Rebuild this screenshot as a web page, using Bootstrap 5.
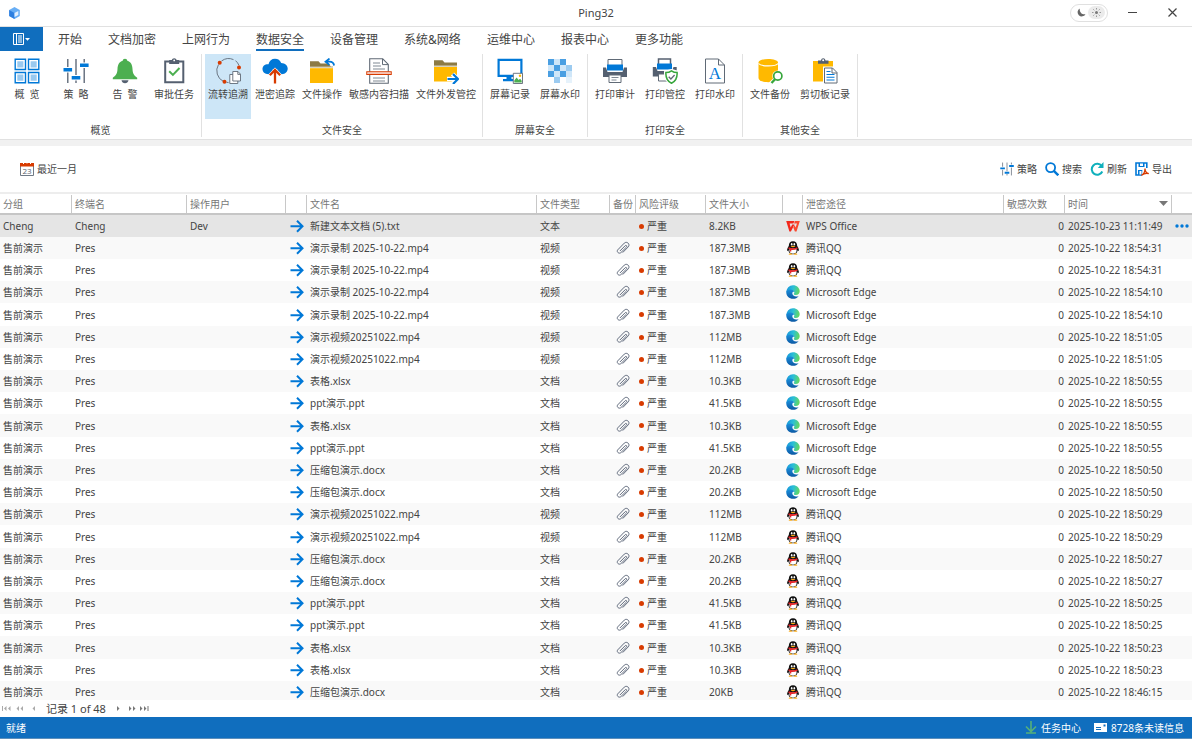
<!DOCTYPE html>
<html lang="zh-CN">
<head>
<meta charset="utf-8">
<meta name="viewport" content="width=device-width, initial-scale=1">
<title>Ping32</title>
<link href="https://cdn.jsdelivr.net/npm/bootstrap@5.3.0/dist/css/bootstrap.min.css" rel="stylesheet">
<style>
  :root { --brand: #106ebe; --ink: #444; --rule: #e1e1e1; }
  body { font-family: "Noto Sans", "Noto Sans CJK SC", sans-serif; font-size: 10px; line-height: 14px; color: var(--ink); background: #fff; }
  button { color: inherit; }
  svg { display: block; flex: none; }

  .titlebar { height: 27px; border-bottom: 1px solid var(--rule); grid-template-columns: 1fr auto 1fr; padding-bottom: 1px; }
  .app-title { font-size: 11px; }
  .theme-switch { width: 38px; height: 18px; border: 1px solid #e0e0e0; border-radius: 9px; background: #fff; padding: 0 2px 0 6px; }
  .theme-sun { width: 17px; height: 13px; border-radius: 7px; background: #ebebeb; }
  .win-btn { width: 40px; height: 24px; }
  .plain { background: none; border: 0; padding: 0; }

  .tabs-row { height: 24px; }
  .file-menu { width: 43px; background: var(--brand); }
  .tabs-list { gap: 26px; padding-left: 15px; }
  .tab-link { color: var(--ink); font-size: 12px; line-height: 16px; padding: 5px 0 0; border-bottom: 2px solid transparent; text-decoration: none; height: 24px; display: block; }
  .tab-link.active { border-color: var(--brand); }

  .ribbon { height: 89px; border-bottom: 1px solid var(--rule); }
  .ribbon-group { border-right: 1px solid var(--rule); margin: 3px 0 2px; padding: 0 4px; }
  .ribbon-group h2 { font-size: 10px; line-height: 14px; margin: 0; font-weight: 400; text-align: center; }
  .tools { gap: 4px; }
  .tools-close { gap: 3px; }
  .tools-tight { gap: 1px; }
  .group-wide { padding: 0 3px; }
  .tool { min-width: 46px; height: 65px; padding: 4px 3px 0; white-space: pre; display: flex; flex-direction: column; align-items: center; gap: 3px; }
  .tool svg { width: 26px; height: 26px; }
  .tool.active { background: #cde6f7; }

  .band { height: 6px; background: #f1f1f1; }
  .filterbar { height: 48px; border-bottom: 2px solid #ededed; padding: 0 20px; }
  .filterbar svg { width: 14px; height: 14px; }
  .tight-gap { gap: 3px; }

  .grid-area { min-height: 0; flex: 1 1 0; }
  .log { table-layout: fixed; width: 100%; border-collapse: separate; border-spacing: 0; white-space: nowrap; }
  .log th { font-weight: 400; color: #777; height: 21px; padding: 0 0 0 3px; border-bottom: 2px solid #c6c6c6; background: linear-gradient(#c8c8c8, #c8c8c8) right 1px / 1px 18px no-repeat; }
  .log th:last-child { background: none; }
  .log td { height: 22px; padding: 0 0 0 3px; }
  .log tbody tr:nth-child(5n) td { height: 23px; }
  .log tbody tr:nth-child(even) { background: #f9f9f9; }
  .log tbody tr.current { background: #e5e5e5; }
  .log .num { text-align: right; padding-right: 1px; }
  .log .ico { padding: 0; }
  .log .ico svg { width: 14px; height: 14px; margin: 0 auto; }
  .log .ico-clip svg { margin-left: 6px; }
  .dot { width: 5px; height: 5px; border-radius: 50%; background: #d83b01; margin: 0 3px 0 0; }

  .pager { height: 17px; padding-left: 2px; color: #888; }
  .pager-text { color: var(--ink); font-size: 11px; margin: 0 6px 0 10px; }
  .statusbar { height: 22px; background: var(--brand); color: #fff; padding: 0 8px 0 6px; border-bottom: 1px solid #5d8fbb; }
  .status-items { gap: 13px; }
</style>
</head>
<body class="d-flex flex-column vh-100 overflow-hidden">

<svg width="0" height="0" class="position-absolute" aria-hidden="true">
  <defs>
    <linearGradient id="edgeA" x1="0" y1="0" x2="1" y2=".2"><stop offset="0" stop-color="#1690dc"/><stop offset=".55" stop-color="#2bbfd6"/><stop offset="1" stop-color="#5fd668"/></linearGradient>
    <linearGradient id="edgeB" x1="0" y1="0" x2="0" y2="1"><stop offset="0" stop-color="#1b8fdc"/><stop offset="1" stop-color="#0c59a4"/></linearGradient>
  </defs>
  <symbol id="i-tiles" viewBox="0 0 26 26">
    <g fill="#fff" stroke="#0078d7" stroke-width="1.4"><path d="M1.2 1.2h10.3v10.3H1.2zM14.5 1.2h10.3v10.3H14.5zM1.2 14.5h10.3v10.3H1.2zM14.5 14.5h10.3v10.3H14.5z"/></g>
    <path fill="#99c9ef" d="M3.3 3.3h6.1v6.1H3.3zM16.6 3.3h6.1v6.1h-6.1zM3.3 16.6h6.1v6.1H3.3zM16.6 16.6h6.1v6.1h-6.1z"/>
  </symbol>
  <symbol id="i-sliders" viewBox="0 0 26 26">
    <path stroke="#556070" stroke-width="1.3" d="M4.8 1v24M13 1v24M21.2 1v24"/>
    <path fill="#fff" d="M0 9h9.500v5.500H0zM8.300 17h9.500v5.500H8.300zM16.500 4.500h9.500V10h-9.500z"/>
    <path fill="#0078d7" d="M.5 10h8.600v3.600H.5zM8.700 18h8.600v3.600H8.700zM17 5.500h8.600v3.600H17z"/>
  </symbol>
  <symbol id="i-bell" viewBox="0 0 26 26">
    <path fill="#4caf50" d="M13 .8c1.400 0 2.200.8 2.300 2 3.800 1.200 5 4.300 5.200 8.200.2 4.200 1.200 6.500 4.700 8.700v1.500H.8v-1.500c3.500-2.200 4.500-4.500 4.700-8.700.2-3.900 1.400-7 5.200-8.200.1-1.200.9-2 2.300-2z"/>
    <path fill="#556070" d="M9.500 22.300h7c-.4 2-1.700 3-3.500 3s-3.100-1-3.500-3z"/>
  </symbol>
  <symbol id="i-approve" viewBox="0 0 26 26">
    <path fill="#fff" stroke="#556070" stroke-width="2" d="M4.200 3.500h18.100v20.800H4.200z"/>
    <path fill="#556070" d="M8.200 2h2.600c.3-1 1.200-1.700 2.400-1.700s2.100.7 2.400 1.700h2.600v4H8.200z"/><circle cx="13.200" cy="2.400" r=".9" fill="#fff"/>
    <path fill="none" stroke="#4caf50" stroke-width="2" d="M8.200 13.200l3.700 3.700 6.600-6.900"/>
  </symbol>
  <symbol id="i-trace" viewBox="0 0 26 26">
    <path fill="none" stroke="#606a76" stroke-width=".9" d="M6.500 3A12 12 0 0 1 18.500 1.600M20.500 2.600A12 12 0 0 1 24 7.500M3.500 6.500A12 12 0 0 0 8.500 23.500M11.500 24.300l2 .2"/>
    <circle cx="4.700" cy="4.800" r="2" fill="#d83b01"/><circle cx="24" cy="9.600" r="2" fill="#d83b01"/><circle cx="9.500" cy="23.700" r="2" fill="#d83b01"/>
    <g fill="#fff" stroke="#606a76" stroke-width=".9"><path d="M14.800 16.500h8v9h-8z"/><path d="M17.800 13.500h5.200l2.500 2.700v6.800h-7.700z"/><path fill="none" d="M22.800 13.700v2.700h2.700"/></g>
  </symbol>
  <symbol id="i-cloud" viewBox="0 0 26 26">
    <path fill="#0078d7" d="M6.500 6.200C7.200 2.700 9.700.7 13 .7c3 0 5.200 1.500 6.200 4.200 4 .2 6.500 2.400 6.500 5.700 0 3.200-2.400 5.600-6 5.600L13 9.500l-6.500 6.700C2.800 16.200.5 14 .5 11c0-2.900 2.300-5 6-4.800z"/>
    <path fill="none" stroke="#fff" stroke-width="4.500" d="M13 17v-6"/>
    <path fill="none" stroke="#d83b01" stroke-width="2.300" d="M13 25.500V12.500M7.800 17.200L13 12l5.200 5.200"/>
  </symbol>
  <symbol id="i-folderback" viewBox="0 0 26 26">
    <path fill="#8c7a45" d="M1 3.300h8.500l2 2.200h12.500v4H1z"/><path fill="#d9d2bc" d="M1 8.600h23v1.600H1z"/><path fill="#ffb900" d="M1 10.200h23V25H1z"/>
    <path fill="#fff" d="M14 0h12v8.600h-4z"/>
    <path fill="none" stroke="#0078d7" stroke-width="1.800" d="M20.500.6L16.500 3.700l4 3.200M16.700 3.700h3.800c2.600 0 4.200 1.300 4.600 3.800"/>
  </symbol>
  <symbol id="i-scan" viewBox="0 0 26 26">
    <path fill="#fff" stroke="#606a76" stroke-width="1.100" d="M3.700.8h13l5.600 5.600v18.800H3.700z"/><path fill="none" stroke="#606a76" d="M16.500 1v5.600H22"/>
    <path stroke="#808994" stroke-width="1.200" d="M7 5h7M7 8h8M7 11h12M7 20h12M7 23h12"/>
    <path fill="#fff" stroke="#d83b01" stroke-width="1.100" d="M.8 13.700h24.400v2.800H.8z"/><path stroke="#f19b80" d="M1.500 15.100h23"/>
  </symbol>
  <symbol id="i-foldersend" viewBox="0 0 26 26">
    <path fill="#8c7a45" d="M1 2.300h8.500l2 2.200h12.500v4H1z"/><path fill="#d9d2bc" d="M1 7.500h23v1.500H1z"/><path fill="#ffb900" d="M1 9h23v14.500H1z"/>
    <path fill="none" stroke="#fff" stroke-width="4.500" d="M14 21h11M19.500 16l5 5-5 5"/>
    <path fill="none" stroke="#0078d7" stroke-width="2.200" d="M14.500 21h10.500M20 16l5 5-5 5"/>
  </symbol>
  <symbol id="i-screen" viewBox="0 0 26 26">
    <path fill="none" stroke="#0078d7" stroke-width="2.200" d="M1.600 1.800h22.800v16H1.600z"/><path fill="#0078d7" d="M9.500 18h5v3h2v2.300H6V21h3.500z"/>
    <path fill="#fff" stroke="#606a76" stroke-width=".9" d="M16.300 15.300h9.200v10.200h-9.200z"/><path fill="#4caf50" d="M17.300 24.500v-2l2.300-3 2 2.500 1.500-1.300 1.600 2v1.800z"/><circle cx="23" cy="17.800" r="1.200" fill="#ffb900"/>
  </symbol>
  <symbol id="i-mosaic" viewBox="0 0 26 26">
    <path fill="#4a9fe2" d="M1 1h6v6H1zM13 1h6v6h-6zM7 7h6v6H7zM1 13h6v6H1zM13 13h6v6h-6z"/>
    <path fill="#9ccbf0" d="M19 7h6v6h-6zM7 19h6v6H7z"/>
    <path fill="#cfe6f8" d="M7 1h6v6H7zM1 7h6v6H1zM13 7h6v6h-6zM7 13h6v6H7zM19 13h6v6h-6z"/>
    <path fill="#e6f2fb" d="M19 19h6v6h-6z"/>
  </symbol>
  <symbol id="i-printer" viewBox="0 0 26 26">
    <path fill="#fff" stroke="#606a76" d="M6 1.500h14v6H6z"/><path fill="#556070" d="M1 9.500h3l1.500 4.500h15L22 9.500h3v9.500H1z"/><path fill="#0078d7" d="M5 6.500h16v6H5z"/>
    <path fill="#fff" stroke="#606a76" d="M7 17h12v7.500H7z"/><path stroke="#808994" d="M9.500 19.500h7M9.500 22h5"/>
  </symbol>
  <symbol id="i-printshield" viewBox="0 0 26 26">
    <path fill="#fff" stroke="#556070" stroke-width="1.500" d="M6.500 1h12v6h-12z"/><path fill="#556070" d="M.8 9h3.200l1.500 4h14.500l1.500-4h3.200v9.500H.8z"/><path fill="#0078d7" d="M5 5.500h15v6H5z"/>
    <path fill="#fff" stroke="#606a76" d="M6.500 16h9v7h-9z"/>
    <path fill="#fff" stroke="#fff" stroke-width="4" d="M19.500 13l5.500 1.500c.3 5-1.500 8.500-5.500 10.500-4-2-5.800-5.500-5.500-10.500z"/>
    <path fill="#fff" stroke="#37a63c" stroke-width="1.500" d="M19.500 12.800c1.700 1.200 3.500 1.700 5.600 1.700.3 5-1.500 8.800-5.600 10.700-4.100-1.900-5.900-5.700-5.600-10.700 2.100 0 3.900-.5 5.600-1.700z"/><path fill="none" stroke="#606a76" stroke-width="1.300" d="M16.700 18.700l2.200 2.300 3.700-4"/>
  </symbol>
  <symbol id="i-dbsearch" viewBox="0 0 26 26">
    <path fill="#ffb900" d="M1.500 4.500C1.500-.2 21 -.2 21 4.500V20c0 5.500-19.500 5.500-19.500 0z"/><path fill="none" stroke="#fff" stroke-width="1.200" d="M1.500 5.500c2.500 3.200 17 3.200 19.500 0"/>
    <path stroke="#fff" stroke-width="5" d="M14 26l6-6"/><circle cx="20.800" cy="18" r="5.500" fill="#fff"/><circle cx="20.800" cy="18" r="4.100" fill="#fff" stroke="#37a63c" stroke-width="1.700"/><path stroke="#37a63c" stroke-width="2.300" d="M14.500 25l3.500-3.800"/>
  </symbol>
  <symbol id="i-clipdoc" viewBox="0 0 26 26">
    <path fill="#ffb900" d="M1 3h20v20.500H1z"/><path fill="#556070" d="M6 2.500h3C9.300 1 10 .3 11.200.3s2 .7 2.300 2.200h3v3.200H6z"/><circle cx="11.200" cy="2.300" r="1" fill="#fff"/>
    <path fill="#fff" stroke="#fff" stroke-width="3" d="M12.500 10h8l4.500 4.500v10.500H12.500z"/><path fill="#fff" stroke="#606a76" d="M12.500 10h8l4.500 4.500V25H12.500z"/><path fill="none" stroke="#606a76" d="M20 10v5h5"/>
    <path stroke="#0078d7" stroke-width="1.100" d="M14.500 13.500h4M14.500 16.500h8M14.500 19.200h8M14.500 22h8"/>
  </symbol>
  <symbol id="i-search" viewBox="0 0 14 14"><circle cx="5.600" cy="5.600" r="4.500" fill="none" stroke="#0078d7" stroke-width="1.800"/><path stroke="#0078d7" stroke-width="2.400" d="M8.800 8.800l4.500 4.500"/></symbol>
  <symbol id="i-refresh" viewBox="0 0 14 14"><path fill="none" stroke="#10b0bc" stroke-width="2" d="M11.700 4A5.500 5.500 0 1 0 12.300 9.500"/><path fill="#10b0bc" d="M13.500 0v6H7.800z"/></symbol>
  <symbol id="i-export" viewBox="0 0 14 14">
    <path fill="#fff" stroke="#0078d7" stroke-width="1.600" d="M1 1h10.800v12H1z"/><path fill="#0078d7" d="M3.500 1h6v4h-6zM3 8h5v5H3z"/><path fill="#fff" d="M5 1.500h3V4H5zM4.500 9h2v3.500h-2z"/>
    <path fill="#fff" d="M7.500 6h6.500v8H7z"/><path fill="none" stroke="#d83b01" stroke-width="1.300" d="M6.500 13.300c2-1 3.500-3.800 3.500-6.800 0 3 1.300 4.700 3.800 5.200-2.500-.7-5-.1-7.300 1.600z"/>
  </symbol>
  <symbol id="i-arrow" viewBox="0 0 14 14"><path fill="none" stroke="#0078d7" stroke-width="2" d="M.5 7.200h12M7 1.700l5.500 5.500L7 12.700"/></symbol>
  <symbol id="i-clip" viewBox="0 0 14 14"><path fill="none" stroke="#606a7c" stroke-width="1" stroke-linecap="round" d="M4.200 9.700l5-5c.9-.9 2.200.4 1.300 1.300l-5.600 5.600C3.200 13.200.100 11 1.700 8.900l6.600-6.800c2.500-2.300 6.200 1 4 3.700L7 11.300"/></symbol>
  <symbol id="i-wps" viewBox="0 0 14 14"><path fill="#f2281c" d="M.2 2h8.300L7.300 4.500H3.600L4.700 8.500 6.200 5.500h2.300L4.900 12.500H3.400z"/><path fill="#fa4a2f" d="M9 2h4.800l-3.300 10.500H8.900L7.300 8.500 8.500 6l1.100 2.500L11 4.500H8z"/></symbol>
  <symbol id="i-qq" viewBox="0 0 14 14">
    <path fill="#111" d="M7 .3c2.800 0 4.200 1.900 4.200 4.600 1 1.500 1.800 3 1.700 4.400-.2 1-.8.7-1.300 0-.3 2.500-2 4-4.600 4S2.700 11.800 2.400 9.300c-.5.7-1.100 1-1.300 0C1 7.900 1.800 6.400 2.800 4.900 2.800 2.200 4.200.3 7 .3z"/>
    <path fill="#fff" d="M3.800 7.500h6.400c1.200 3.300-.5 5.200-3.200 5.200S2.600 10.800 3.800 7.500z"/><ellipse cx="5.700" cy="3.200" rx=".8" ry="1.200" fill="#fff"/><ellipse cx="8.300" cy="3.200" rx=".8" ry="1.200" fill="#fff"/>
    <path fill="#fbab18" d="M4.500 5.300q2.500-1.100 5 0Q7 7 4.500 5.300zM2.500 13.200q2-1.700 4 0-2 1-4 0zM7.500 13.200q2-1.700 4 0-2 1-4 0z"/>
    <path fill="#e8262a" d="M2.700 6.300q4.300 2 8.600 0l.3 1.400q-3 1.500-6.300 1.200v1.700H3.900V8.400l-1.500-.7z"/>
  </symbol>
  <symbol id="i-edge" viewBox="0 0 14 14">
    <path fill="url(#edgeA)" d="M.3 7.500C.3 3.500 3.300.3 7 .3c3.800 0 6.700 2.700 6.700 5.900 0 2.300-1.600 3.800-3.800 3.800-1.500 0-2.100-.5-2.100-1C7.800 8.600 8.400 8.200 8.300 7.200 8.200 6 6.800 5 5 5z"/>
    <path fill="url(#edgeB)" d="M.3 7.500C.3 5.500 2.500 4.300 4.600 4.500c2.200.1 3.600 1.300 3.700 2.500C7.300 6.400 6.300 7 6.300 8.300c0 1.700 1.700 3.200 3.900 3.200 1 0 1.800-.3 2.500-.6-1.300 1.900-3.400 2.900-5.700 2.900C3.200 13.800.3 11 .3 7.500z"/>
  </symbol>
</svg>

<header class="titlebar d-grid align-items-center flex-shrink-0">
  <div class="ps-2"><svg width="14" height="12" viewBox="0 0 14 12"><path fill="#68aef5" d="M6.500 0l5.300 3v6l-5.300 3-5.300-3V3z"/><path fill="#2d7fe0" d="M1.200 3l5.300 3v6L1.200 9z"/><path fill="#e3f0ff" d="M6.500 6l3.800-2v4L6.500 10z"/></svg></div>
  <div class="app-title">Ping32</div>
  <div class="d-flex align-items-center justify-content-end">
    <button class="theme-switch d-flex align-items-center justify-content-between" type="button" aria-label="主题">
      <svg width="9" height="9" viewBox="0 0 9 9"><path fill="#666" d="M2.800.5a4.200 4.200 0 1 0 5.700 5.700C5.500 7 2.200 4.500 2.800.5z"/></svg>
      <span class="theme-sun d-flex align-items-center justify-content-center"><svg width="9" height="9" viewBox="0 0 9 9"><circle cx="4.500" cy="4.500" r="1.500" fill="#777"/><path stroke="#999" d="M4.500 0v1.500M4.500 7.500V9M0 4.500h1.500M7.500 4.500H9M1.300 1.300l1 1M6.700 6.700l1 1M7.700 1.300l-1 1M2.300 6.700l-1 1"/></svg></span>
    </button>
    <button class="plain win-btn ms-1" type="button" aria-label="最小化"><svg class="mx-auto" width="9" height="9" viewBox="0 0 9 9"><path stroke="#444" d="M0 4.500h9"/></svg></button>
    <button class="plain win-btn" type="button" aria-label="关闭"><svg class="mx-auto" width="9" height="9" viewBox="0 0 9 9"><path stroke="#444" stroke-width="1.200" d="M.5.5l8 8M8.500.5l-8 8"/></svg></button>
  </div>
</header>

<nav class="tabs-row d-flex flex-shrink-0">
  <button class="plain file-menu d-flex align-items-center justify-content-center" type="button" aria-label="菜单">
    <svg width="17" height="12" viewBox="0 0 17 12"><path fill="none" stroke="#fff" d="M.5.5h10v11H.5zM3.500.5v11"/><path stroke="#fff" d="M5 3h4M5 5h4M5 7h4M5 9h4"/><path fill="#fff" d="M12 5h5l-2.500 2.700z"/></svg>
  </button>
  <div class="tabs-list d-flex">
    <a class="tab-link" href="#">开始</a><a class="tab-link" href="#">文档加密</a><a class="tab-link" href="#">上网行为</a><a class="tab-link active" href="#">数据安全</a><a class="tab-link" href="#">设备管理</a><a class="tab-link" href="#">系统&amp;网络</a><a class="tab-link" href="#">运维中心</a><a class="tab-link" href="#">报表中心</a><a class="tab-link" href="#">更多功能</a>
  </div>
</nav>

<section class="ribbon d-flex flex-shrink-0">
  <div class="ribbon-group d-flex flex-column justify-content-between">
    <div class="tools tools-close d-flex">
      <button class="plain tool" type="button"><svg><use href="#i-tiles"/></svg>概  览</button>
      <button class="plain tool" type="button"><svg><use href="#i-sliders"/></svg>策  略</button>
      <button class="plain tool" type="button"><svg><use href="#i-bell"/></svg>告  警</button>
      <button class="plain tool" type="button"><svg><use href="#i-approve"/></svg>审批任务</button>
    </div>
    <h2>概览</h2>
  </div>
  <div class="ribbon-group group-wide d-flex flex-column justify-content-between">
    <div class="tools tools-tight d-flex">
      <button class="plain tool active" type="button"><svg><use href="#i-trace"/></svg>流转追溯</button>
      <button class="plain tool" type="button"><svg><use href="#i-cloud"/></svg>泄密追踪</button>
      <button class="plain tool" type="button"><svg><use href="#i-folderback"/></svg>文件操作</button>
      <button class="plain tool" type="button"><svg><use href="#i-scan"/></svg>敏感内容扫描</button>
      <button class="plain tool" type="button"><svg><use href="#i-foldersend"/></svg>文件外发管控</button>
    </div>
    <h2>文件安全</h2>
  </div>
  <div class="ribbon-group d-flex flex-column justify-content-between">
    <div class="tools d-flex">
      <button class="plain tool" type="button"><svg><use href="#i-screen"/></svg>屏幕记录</button>
      <button class="plain tool" type="button"><svg><use href="#i-mosaic"/></svg>屏幕水印</button>
    </div>
    <h2>屏幕安全</h2>
  </div>
  <div class="ribbon-group d-flex flex-column justify-content-between">
    <div class="tools d-flex">
      <button class="plain tool" type="button"><svg><use href="#i-printer"/></svg>打印审计</button>
      <button class="plain tool" type="button"><svg><use href="#i-printshield"/></svg>打印管控</button>
      <button class="plain tool" type="button"><svg viewBox="0 0 26 26"><path fill="#fff" stroke="#606a76" d="M3.500 1h13l6 6v18h-19z"/><path fill="none" stroke="#606a76" d="M16.500 1v6h6"/><text x="13" y="21" text-anchor="middle" font-family="Liberation Serif, serif" font-size="17" fill="#0078d7">A</text></svg>打印水印</button>
    </div>
    <h2>打印安全</h2>
  </div>
  <div class="ribbon-group d-flex flex-column justify-content-between">
    <div class="tools d-flex">
      <button class="plain tool" type="button"><svg><use href="#i-dbsearch"/></svg>文件备份</button>
      <button class="plain tool" type="button"><svg><use href="#i-clipdoc"/></svg>剪切板记录</button>
    </div>
    <h2>其他安全</h2>
  </div>
</section>
<div class="band flex-shrink-0"></div>

<div class="filterbar d-flex align-items-center justify-content-between flex-shrink-0">
  <button class="plain d-flex align-items-center tight-gap" type="button"><svg viewBox="0 0 14 14"><path fill="#fff" stroke="#707a86" d="M.5 2.500h13v11H.5z"/><path fill="#d83b01" d="M0 1h14v3.500H0z"/><path stroke="#fff" d="M3.500 0v2M7 0v1.500M10.500 0v2"/><text x="7" y="12" text-anchor="middle" font-size="8" font-family="Open Sans, sans-serif" fill="#5a6470">23</text></svg>最近一月</button>
  <div class="d-flex gap-2">
    <button class="plain d-flex align-items-center tight-gap" type="button"><svg><use href="#i-sliders"/></svg>策略</button>
    <button class="plain d-flex align-items-center tight-gap" type="button"><svg><use href="#i-search"/></svg>搜索</button>
    <button class="plain d-flex align-items-center tight-gap" type="button"><svg><use href="#i-refresh"/></svg>刷新</button>
    <button class="plain d-flex align-items-center tight-gap" type="button"><svg><use href="#i-export"/></svg>导出</button>
  </div>
</div>

<main class="grid-area overflow-hidden">
  <table class="log">
    <colgroup>
      <col style="width:72px"><col style="width:115px"><col style="width:99px"><col style="width:21px"><col><col style="width:73px"><col style="width:26px"><col style="width:70px"><col style="width:77px"><col style="width:20px"><col style="width:201px"><col style="width:61px"><col style="width:107px"><col style="width:20px">
    </colgroup>
    <thead>
      <tr><th>分组</th><th>终端名</th><th>操作用户</th><th></th><th>文件名</th><th>文件类型</th><th>备份</th><th>风险评级</th><th>文件大小</th><th></th><th>泄密途径</th><th>敏感次数</th>
        <th><div class="d-flex align-items-center justify-content-between pe-1">时间<svg width="9" height="5" viewBox="0 0 9 5"><path fill="#777" d="M0 0h9L4.500 5z"/></svg></div></th><th></th></tr>
    </thead>
    <tbody id="rows"></tbody>
  </table>
</main>

<div class="pager d-flex align-items-center flex-shrink-0">
  <button class="plain" type="button" aria-label="第一条"><svg width="9" height="5" viewBox="0 0 9 5"><path fill="#aaa" d="M0 0h1v5H0zM4.500 0v5L2 2.500zM8.500 0v5L6 2.500z"/></svg></button>
  <button class="plain ms-1" type="button" aria-label="上一页"><svg width="9" height="5" viewBox="0 0 9 5"><path fill="#aaa" d="M4 0v5L1.500 2.500zM8 0v5L5.500 2.500z"/></svg></button>
  <button class="plain ms-2" type="button" aria-label="上一条"><svg width="4" height="5" viewBox="0 0 4 5"><path fill="#aaa" d="M3 0v5L.5 2.500z"/></svg></button>
  <span class="pager-text">记录 1 of 48</span>
  <button class="plain ms-1" type="button" aria-label="下一条"><svg width="4" height="5" viewBox="0 0 4 5"><path fill="#777" d="M1 0v5l2.500-2.500z"/></svg></button>
  <button class="plain ms-2" type="button" aria-label="下一页"><svg width="8" height="5" viewBox="0 0 8 5"><path fill="#777" d="M1 0v5l2.500-2.500zM5 0v5l2.500-2.500z"/></svg></button>
  <button class="plain ms-1" type="button" aria-label="最后一条"><svg width="9" height="5" viewBox="0 0 9 5"><path fill="#777" d="M0 0v5l2.500-2.500zM4 0v5l2.500-2.500zM7.500 0h1v5h-1z"/></svg></button>
</div>

<footer class="statusbar d-flex align-items-center justify-content-between flex-shrink-0">
  <span>就绪</span>
  <div class="status-items d-flex align-items-center">
    <button class="plain d-flex align-items-center gap-1" type="button"><svg width="12" height="13" viewBox="0 0 12 13"><path fill="none" stroke="#55b07a" stroke-width="1.600" d="M6 0v11M1 5.500l5 5 5-5M1 12h10"/></svg>任务中心</button>
    <button class="plain d-flex align-items-center gap-1" type="button"><svg width="13" height="9" viewBox="0 0 13 9"><path fill="#fff" d="M0 0h13v9H0z"/><path stroke="#106ebe" d="M2 4.500h5M2 6.500h5"/><path fill="#106ebe" d="M9.500 1.500h2v2h-2z"/></svg>8728条未读信息</button>
  </div>
</footer>

<script>
  const V = '视频', D = '文档', Q = '腾讯QQ', E = 'Microsoft Edge';
  const log = [
    ['新建文本文档 (5).txt', '文本', '8.2KB', 'WPS Office', '23 11:11:49'],
    ['演示录制 2025-10-22.mp4', V, '187.3MB', Q, '22 18:54:31'],
    ['演示录制 2025-10-22.mp4', V, '187.3MB', Q, '22 18:54:31'],
    ['演示录制 2025-10-22.mp4', V, '187.3MB', E, '22 18:54:10'],
    ['演示录制 2025-10-22.mp4', V, '187.3MB', E, '22 18:54:10'],
    ['演示视频20251022.mp4', V, '112MB', E, '22 18:51:05'],
    ['演示视频20251022.mp4', V, '112MB', E, '22 18:51:05'],
    ['表格.xlsx', D, '10.3KB', E, '22 18:50:55'],
    ['ppt演示.ppt', D, '41.5KB', E, '22 18:50:55'],
    ['表格.xlsx', D, '10.3KB', E, '22 18:50:55'],
    ['ppt演示.ppt', D, '41.5KB', E, '22 18:50:55'],
    ['压缩包演示.docx', D, '20.2KB', E, '22 18:50:50'],
    ['压缩包演示.docx', D, '20.2KB', E, '22 18:50:50'],
    ['演示视频20251022.mp4', V, '112MB', Q, '22 18:50:29'],
    ['演示视频20251022.mp4', V, '112MB', Q, '22 18:50:29'],
    ['压缩包演示.docx', D, '20.2KB', Q, '22 18:50:27'],
    ['压缩包演示.docx', D, '20.2KB', Q, '22 18:50:27'],
    ['ppt演示.ppt', D, '41.5KB', Q, '22 18:50:25'],
    ['ppt演示.ppt', D, '41.5KB', Q, '22 18:50:25'],
    ['表格.xlsx', D, '10.3KB', Q, '22 18:50:23'],
    ['表格.xlsx', D, '10.3KB', Q, '22 18:50:23'],
    ['压缩包演示.docx', D, '20KB', Q, '22 18:46:15']
  ];
  const icon = id => `<svg><use href="#i-${id}"/></svg>`;
  const logo = { [Q]: 'qq', [E]: 'edge', 'WPS Office': 'wps' };
  document.getElementById('rows').innerHTML = log.map(([name, type, size, via, at], i) => `
    <tr${i ? '' : ' class="current"'}>
      <td>${i ? '售前演示' : 'Cheng'}</td><td>${i ? 'Pres' : 'Cheng'}</td><td>${i ? '' : 'Dev'}</td>
      <td class="ico">${icon('arrow')}</td><td>${name}</td><td>${type}</td>
      <td class="ico ico-clip">${i ? icon('clip') : ''}</td>
      <td><div class="d-flex align-items-center"><span class="dot"></span>严重</div></td>
      <td>${size}</td><td class="ico">${icon(logo[via])}</td><td>${via}</td>
      <td class="num">0</td><td>2025-10-${at}</td>
      <td class="ico">${i ? '' : '<button class="plain d-block w-100" type="button" aria-label="更多"><svg viewBox="0 0 14 14"><g fill="#0078d7"><circle cx="2" cy="7" r="1.700"/><circle cx="7" cy="7" r="1.700"/><circle cx="12" cy="7" r="1.700"/></g></svg></button>'}</td>
    </tr>`).join('');
</script>
<script src="https://cdn.jsdelivr.net/npm/bootstrap@5.3.0/dist/js/bootstrap.bundle.min.js"></script>
</body>
</html>
